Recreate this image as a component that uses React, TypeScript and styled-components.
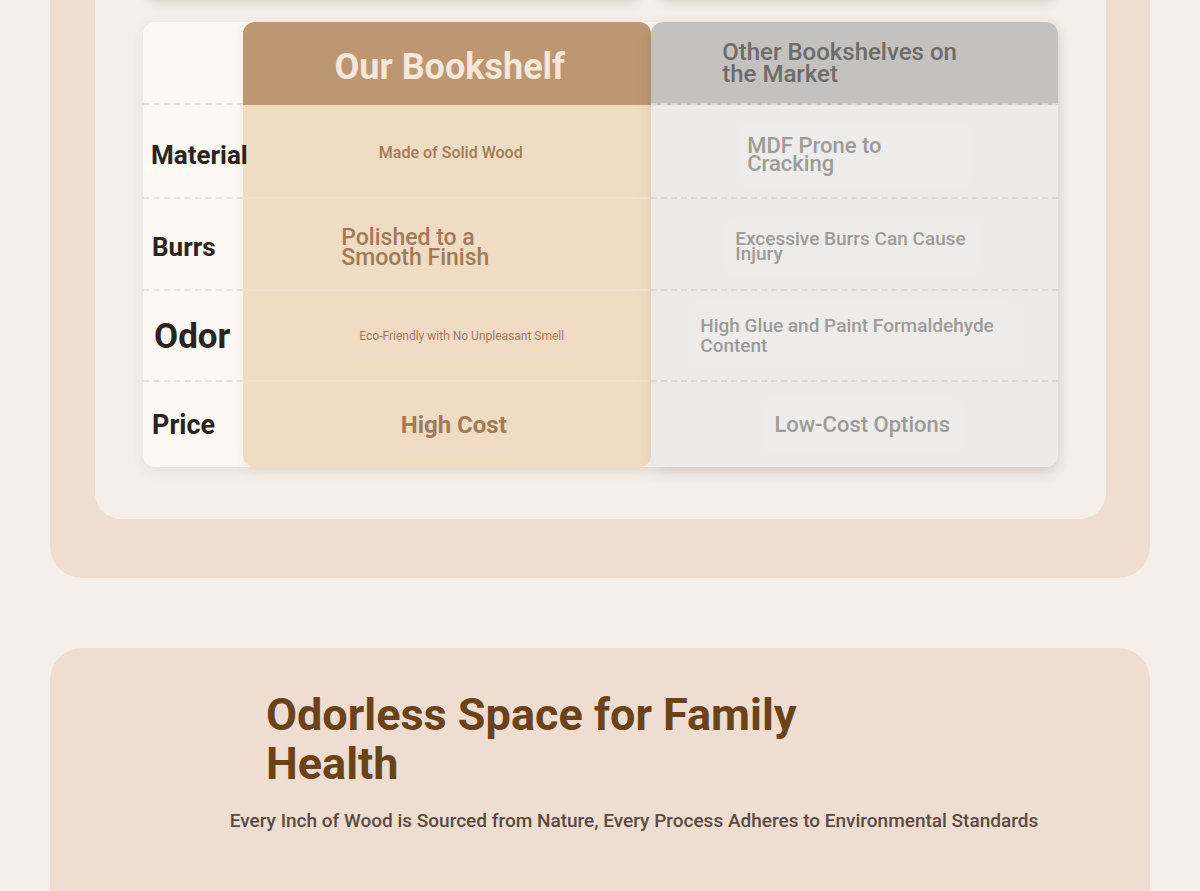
import styled, { createGlobalStyle } from 'styled-components';

const GlobalStyle = createGlobalStyle`
  html, body {
    margin: 0;
    padding: 0;
    background: #f6efe9;
    font-family: Roboto, "Noto Sans", "Liberation Sans", sans-serif;
  }
  * { box-sizing: border-box; }
`;

type Tone = 'ours' | 'other';

interface ChipSpec {
  text: string;
  size: number;
  weight?: number;
  lh?: number;
  w?: number;
  pad?: number;
  shift?: number;
  dy?: number;
}

interface Row {
  label: string;
  labelSize: number;
  labelDy: number;
  labelX: number;
  h: number;
  ours: ChipSpec;
  other: ChipSpec;
}

const rows: Row[] = [
  {
    label: 'Material',
    labelSize: 26,
    labelDy: 4,
    labelX: 8,
    h: 94,
    ours: { text: 'Made of Solid Wood', size: 16, shift: 4, dy: 2 },
    other: { text: 'MDF Prone to Cracking', size: 22, lh: 0.8, w: 232, pad: 9, dy: 4 },
  },
  {
    label: 'Burrs',
    labelSize: 26,
    labelDy: 3,
    labelX: 9,
    h: 92,
    ours: { text: 'Polished to a Smooth Finish', size: 23, lh: 0.87, w: 233, pad: 11, dy: 4 },
    other: { text: 'Excessive Burrs Can Cause Injury', size: 19, lh: 0.8, w: 256, pad: 9, dy: 2 },
  },
  {
    label: 'Odor',
    labelSize: 35,
    labelDy: 1,
    labelX: 11,
    h: 91,
    ours: { text: 'Eco-Friendly with No Unpleasant Smell', size: 12, weight: 400, shift: 15, dy: 1 },
    other: { text: 'High Glue and Paint Formaldehyde Content', size: 19, lh: 1.05, w: 330, pad: 11 },
  },
  {
    label: 'Price',
    labelSize: 27,
    labelDy: 0,
    labelX: 9,
    h: 85,
    ours: { text: 'High Cost', size: 24, weight: 700, shift: 7, dy: 1 },
    other: { text: 'Low-Cost Options', size: 22, shift: 8, dy: 1 },
  },
];

const Page = styled.div`
  padding: 0 50px 40px;
  overflow: hidden;
`;

const OuterSection = styled.section`
  margin-top: -140px;
  background: #eeddd0;
  border-radius: 32px;
  padding: 0 44px 59px 45px;
`;

const InnerPanel = styled.div`
  background: #f6efe9;
  border-radius: 26px;
  padding: 0 48px 52px;
`;

const CardRow = styled.div`
  display: grid;
  grid-template-columns: 494px 398px;
  gap: 18px;
  padding-left: 4px;
  height: 140px;
`;

const TeaserCard = styled.div`
  background: #f4ede7;
  border-radius: 12px;
  box-shadow: 0 3px 10px rgba(80, 60, 45, 0.16);
`;

const Table = styled.div`
  margin-top: 22px;
  display: flex;
  background: #fdf8f4;
  border-radius: 12px;
  box-shadow: 0 4px 14px rgba(90, 70, 50, 0.08);
`;

const LabelColumn = styled.div`
  width: 100px;
  flex-shrink: 0;
  display: flex;
  flex-direction: column;
  position: relative;
  z-index: 2;
`;

const LabelHead = styled.div`
  height: 83px;
  border-bottom: 2px dashed #e6e1dc;
`;

const LabelCell = styled.div<{ $h: number; $size: number; $dy: number; $x: number; $last?: boolean }>`
  height: ${(p) => p.$h}px;
  display: flex;
  align-items: center;
  padding-left: ${(p) => p.$x}px;
  padding-top: ${(p) => p.$dy * 2}px;
  font-size: ${(p) => p.$size}px;
  font-weight: 700;
  color: #2b2320;
  white-space: nowrap;
  border-bottom: ${(p) => (p.$last ? 'none' : '2px dashed #e6e1dc')};
`;

const Column = styled.div<{ $tone: Tone }>`
  flex: 1;
  display: flex;
  flex-direction: column;
  border-radius: 12px;
  overflow: hidden;
  background: ${(p) => (p.$tone === 'ours' ? '#f0dcc0' : '#ecebea')};
  box-shadow: ${(p) =>
    p.$tone === 'ours'
      ? '0 3px 10px rgba(150, 110, 70, 0.12)'
      : '0 5px 14px rgba(60, 50, 40, 0.13)'};
`;

const ColumnHead = styled.div<{ $tone: Tone }>`
  height: 83px;
  display: flex;
  align-items: center;
  justify-content: center;
  background: ${(p) => (p.$tone === 'ours' ? '#bc9772' : '#c3c2c0')};
  border-bottom: ${(p) => (p.$tone === 'ours' ? 'none' : '2px dashed #d9d8d6')};
`;

const OurTitle = styled.h3`
  margin: 0;
  font-size: 36px;
  font-weight: 700;
  color: #f6e7d7;
  transform: translateX(3px) translateY(3px);
`;

const OtherTitle = styled.h3`
  margin: 0;
  width: 280px;
  padding-left: 8px;
  font-size: 24px;
  font-weight: 500;
  line-height: 0.88;
  color: #6e6c6a;
  transform: translateY(1px);
`;

const ValueCell = styled.div<{ $h: number; $tone: Tone; $last?: boolean }>`
  height: ${(p) => p.$h}px;
  display: flex;
  align-items: center;
  justify-content: center;
  border-bottom: ${(p) =>
    p.$last ? 'none' : p.$tone === 'ours' ? '2px solid #f4e3cb' : '2px dashed #d9d8d6'};
`;

const Chip = styled.div<{
  $tone: Tone;
  $size: number;
  $weight: number;
  $lh: number;
  $w?: number;
  $pad: number;
  $shift: number;
  $dy: number;
}>`
  width: ${(p) => (p.$w ? `${p.$w}px` : 'auto')};
  padding: 14px ${(p) => p.$pad}px;
  border-radius: 8px;
  font-size: ${(p) => p.$size}px;
  font-weight: ${(p) => p.$weight};
  line-height: ${(p) => p.$lh};
  text-align: left;
  color: ${(p) => (p.$tone === 'ours' ? '#a07a5a' : '#9d9b99')};
  background: ${(p) => (p.$tone === 'ours' ? 'rgba(255, 245, 230, 0.05)' : 'rgba(255, 255, 255, 0.06)')};
  transform: translate(${(p) => p.$shift}px, ${(p) => p.$dy}px);
`;

const SecondSection = styled.section`
  margin-top: 70px;
  background: #eeddd0;
  border-radius: 32px;
  padding: 42px 40px 80px;
  min-height: 300px;
`;

const Heading = styled.h2`
  margin: 0 auto;
  max-width: 650px;
  font-size: 45px;
  font-weight: 700;
  line-height: 49px;
  color: #6b431b;
  transform: translateX(-9px);
`;

const Subtitle = styled.p`
  margin: 19px 0 0;
  text-align: center;
  font-size: 19px;
  font-weight: 500;
  line-height: 28px;
  color: #5b4b42;
  transform: translateX(34px);
`;

function ValueChip({ spec, tone }: { spec: ChipSpec; tone: Tone }) {
  return (
    <Chip
      $tone={tone}
      $size={spec.size}
      $weight={spec.weight ?? 500}
      $lh={spec.lh ?? 1.2}
      $w={spec.w}
      $pad={spec.pad ?? 12}
      $shift={spec.shift ?? 0}
      $dy={spec.dy ?? 0}
    >
      {spec.text}
    </Chip>
  );
}

export default function App() {
  return (
    <Page>
      <GlobalStyle />
      <OuterSection>
        <InnerPanel>
          <CardRow>
            <TeaserCard />
            <TeaserCard />
          </CardRow>
          <Table>
            <LabelColumn>
              <LabelHead />
              {rows.map((r, i) => (
                <LabelCell
                  key={r.label}
                  $h={r.h}
                  $size={r.labelSize}
                  $dy={r.labelDy}
                  $x={r.labelX}
                  $last={i === rows.length - 1}
                >
                  {r.label}
                </LabelCell>
              ))}
            </LabelColumn>
            <Column $tone="ours">
              <ColumnHead $tone="ours">
                <OurTitle>Our Bookshelf</OurTitle>
              </ColumnHead>
              {rows.map((r, i) => (
                <ValueCell key={r.label} $h={r.h} $tone="ours" $last={i === rows.length - 1}>
                  <ValueChip spec={r.ours} tone="ours" />
                </ValueCell>
              ))}
            </Column>
            <Column $tone="other">
              <ColumnHead $tone="other">
                <OtherTitle>Other Bookshelves on the Market</OtherTitle>
              </ColumnHead>
              {rows.map((r, i) => (
                <ValueCell key={r.label} $h={r.h} $tone="other" $last={i === rows.length - 1}>
                  <ValueChip spec={r.other} tone="other" />
                </ValueCell>
              ))}
            </Column>
          </Table>
        </InnerPanel>
      </OuterSection>
      <SecondSection>
        <Heading>Odorless Space for Family Health</Heading>
        <Subtitle>
          Every Inch of Wood is Sourced from Nature, Every Process Adheres to Environmental Standards
        </Subtitle>
      </SecondSection>
    </Page>
  );
}
